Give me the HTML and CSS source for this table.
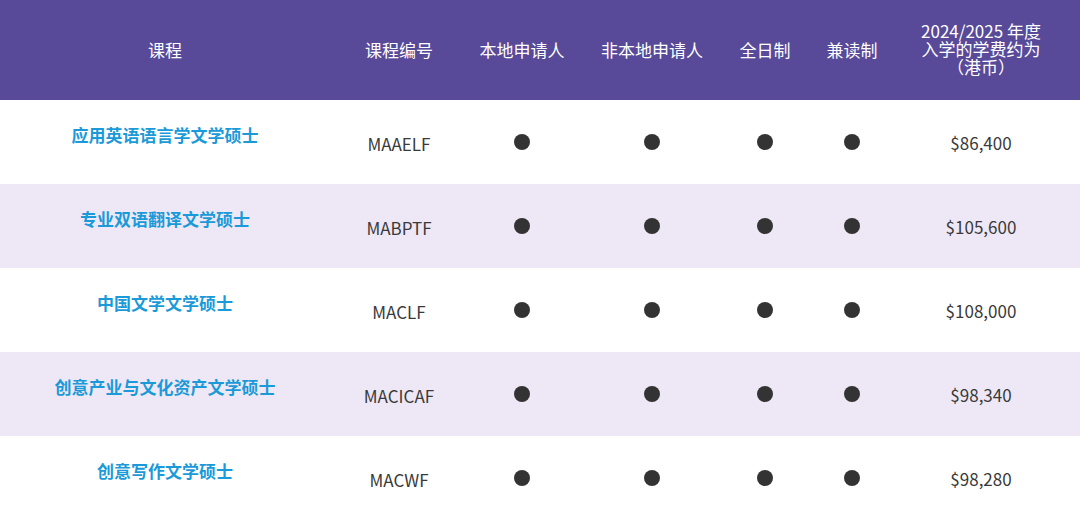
FILE: index.html
```html
<!DOCTYPE html>
<html lang="zh-CN">
<head>
<meta charset="utf-8">
<title>课程</title>
<link rel="stylesheet" href="styles.css">
</head>
<body>
<table class="courses">
  <colgroup>
    <col class="c-name"><col class="c-code"><col class="c-local"><col class="c-nonlocal"><col class="c-ft"><col class="c-pt"><col class="c-fee">
  </colgroup>
  <thead>
    <tr>
      <th>课程</th>
      <th>课程编号</th>
      <th>本地申请人</th>
      <th>非本地申请人</th>
      <th>全日制</th>
      <th>兼读制</th>
      <th class="fee">2024/2025 年度<br>入学的学费约为<br>（港币）</th>
    </tr>
  </thead>
  <tbody>
    <tr>
      <td class="name">应用英语语言学文学硕士</td>
      <td class="code">MAAELF</td>
      <td><span class="dot"></span></td>
      <td><span class="dot"></span></td>
      <td><span class="dot"></span></td>
      <td><span class="dot"></span></td>
      <td class="fee">$86,400</td>
    </tr>
    <tr class="alt">
      <td class="name">专业双语翻译文学硕士</td>
      <td class="code">MABPTF</td>
      <td><span class="dot"></span></td>
      <td><span class="dot"></span></td>
      <td><span class="dot"></span></td>
      <td><span class="dot"></span></td>
      <td class="fee">$105,600</td>
    </tr>
    <tr>
      <td class="name">中国文学文学硕士</td>
      <td class="code">MACLF</td>
      <td><span class="dot"></span></td>
      <td><span class="dot"></span></td>
      <td><span class="dot"></span></td>
      <td><span class="dot"></span></td>
      <td class="fee">$108,000</td>
    </tr>
    <tr class="alt">
      <td class="name">创意产业与文化资产文学硕士</td>
      <td class="code">MACICAF</td>
      <td><span class="dot"></span></td>
      <td><span class="dot"></span></td>
      <td><span class="dot"></span></td>
      <td><span class="dot"></span></td>
      <td class="fee">$98,340</td>
    </tr>
    <tr>
      <td class="name">创意写作文学硕士</td>
      <td class="code">MACWF</td>
      <td><span class="dot"></span></td>
      <td><span class="dot"></span></td>
      <td><span class="dot"></span></td>
      <td><span class="dot"></span></td>
      <td class="fee">$98,280</td>
    </tr>
  </tbody>
</table>
</body>
</html>
```

FILE: styles.css
```css
html, body {
  margin: 0;
  padding: 0;
  background: #ffffff;
}

body {
  font-family: "Noto Sans CJK SC", "Noto Sans", sans-serif;
  color: #333333;
}

.courses {
  width: 1080px;
  border-collapse: collapse;
  table-layout: fixed;
}

.c-name { width: 330px; }
.c-code { width: 138px; }
.c-local { width: 108px; }
.c-nonlocal { width: 152px; }
.c-ft { width: 74px; }
.c-pt { width: 100px; }
.c-fee { width: 178px; }

.courses th,
.courses td {
  padding: 0;
  text-align: center;
  vertical-align: middle;
}

.courses thead tr {
  height: 100px;
  background: #584a99;
}

.courses th {
  color: #ffffff;
  font-weight: 400;
  font-size: 17px;
  line-height: 18px;
  white-space: nowrap;
}

.courses th.fee {
  padding-right: 20px;
  padding-bottom: 2px;
}

.courses tbody tr {
  height: 84px;
}

.courses tbody tr.alt {
  background: #eee8f6;
}

.courses td {
  font-size: 17px;
  color: #3a3a3a;
}

.courses td.code {
  padding-top: 2px;
}

.courses td.fee {
  padding-right: 20px;
  padding-top: 1px;
}

.courses td.name {
  color: #1a9ad8;
  font-weight: 700;
  padding-bottom: 15px;
}

.dot {
  display: block;
  margin: 0 auto;
  width: 16px;
  height: 16px;
  border-radius: 50%;
  background: #333333;
}
```
